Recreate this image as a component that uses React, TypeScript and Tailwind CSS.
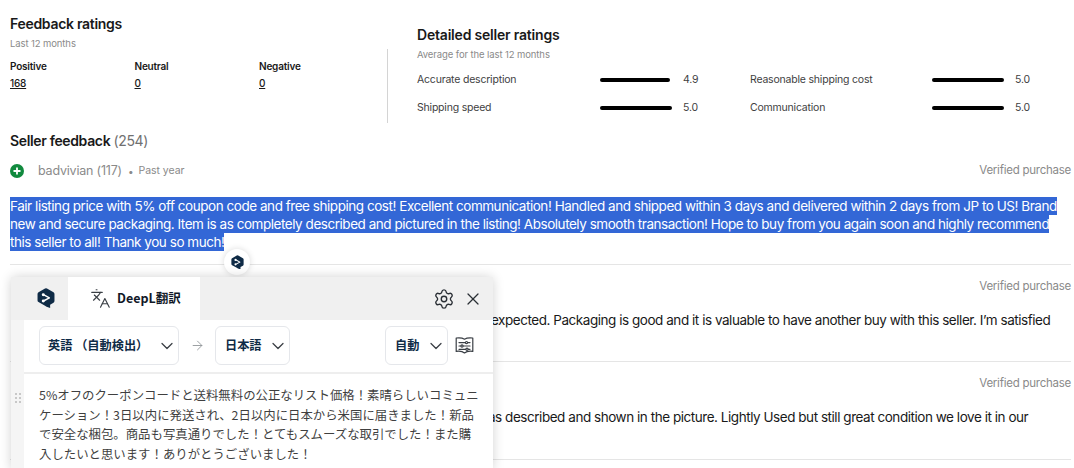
import { ArrowRight, ChevronDown, Languages, Settings, X } from 'lucide-react'

const ink = 'text-[#191919]'

function DeepLMark({ size }: { size: number }) {
  return (
    <svg width={size} height={size * 1.15} viewBox="1 0.500 18 21" fill="none">
      <path d="M9 1.100a2 2 0 0 1 2 0l6.600 3.800a2 2 0 0 1 1 1.700v7.200a2 2 0 0 1-1 1.700l-3.400 2v3.200l-3.600-1.200-1.600-.9-6.600-3.800a2 2 0 0 1-1-1.700V6.600a2 2 0 0 1 1-1.700z" fill="#0f2b46" />
      <path d="M7.400 7.300l6 3.200-6 3.200" stroke="#fff" strokeWidth="1.500" strokeLinecap="round" strokeLinejoin="round" />
      <circle cx="7.200" cy="7.400" r="1.500" fill="#fff" />
      <circle cx="7.200" cy="13.600" r="1.500" fill="#fff" />
    </svg>
  )
}

function BookSliders() {
  return (
    <svg width="19" height="19" viewBox="0 0 19 19" fill="none" stroke="#3a3f45" strokeWidth="1.200" strokeLinecap="round" strokeLinejoin="round">
      <path d="M9.500 3.200C7.500 1.900 4.200 1.600 1.200 2v13.400c3-.4 6.300-.1 8.300 1.600 2-1.700 5.300-2 8.300-1.600V2c-3-.4-6.300-.1-8.300 1.200z" />
      <path d="M4 6.600h11M4 10h11M4 13.300h11" />
      <circle cx="11.500" cy="6.600" r="1.100" fill="#fff" />
      <circle cx="7" cy="10" r="1.100" fill="#fff" />
      <circle cx="12" cy="13.300" r="1.100" fill="#fff" />
    </svg>
  )
}

function Rating({ label, value, barW, first }: { label: string; value: string; barW: string; first?: boolean }) {
  return (
    <div className="flex h-[28px] items-center text-[10.500px] tracking-[-0.2px] text-[#41413f]">
      <span className={first ? 'w-[183px]' : 'w-[182px]'}>{label}</span>
      <span className="w-[83px]">
        <span className={`block h-[4px] rounded-full bg-black ${barW}`} />
      </span>
      <span>{value}</span>
    </div>
  )
}

function Review({ text, pad }: { text: string; pad: string }) {
  return (
    <div className="border-t border-[#e5e5e5]">
      <div className="h-[46px] pt-[13px] text-right text-[11.500px] leading-[16px] tracking-[-0.25px] text-[#8a8a8a]">Verified purchase</div>
      <p className={`${pad} whitespace-nowrap text-[13.500px] leading-[18px] tracking-[-0.46px] text-[#191919]`}>{text}</p>
    </div>
  )
}

export default function App() {
  return (
    <div className="relative h-[468px] w-[1074px] overflow-hidden bg-white font-['Inter','Liberation_Sans',sans-serif]">
      <div className="pl-[10px] pr-[3px]">
        <section className="flex h-[123px]">
          <div className="w-[377px] pt-[15px]">
            <h2 className={`text-[14px] font-semibold leading-[18px] tracking-[-0.3px] ${ink}`}>Feedback ratings</h2>
            <p className="mt-[4px] text-[9.500px] leading-[14px] tracking-[-0.1px] text-[#8a8a8a]">Last 12 months</p>
            <div className="mt-[7px] grid grid-cols-[124.500px_124.500px_1fr] text-[10px] leading-[16px] tracking-[-0.2px] text-[#191919]">
              {[['Positive', '168'], ['Neutral', '0'], ['Negative', '0']].map(([name, count]) => (
                <div key={name}>
                  <div className="font-semibold">{name}</div>
                  <a className="mt-[1px] block font-medium underline">{count}</a>
                </div>
              ))}
            </div>
          </div>
          <div className="mt-[49px] w-px bg-[#d4d4d4]" />
          <div className="pl-[29px] pt-[26px]">
            <h2 className={`text-[14px] font-semibold leading-[18px] tracking-[-0.2px] ${ink}`}>Detailed seller ratings</h2>
            <p className="mt-[4px] text-[9.500px] leading-[14px] tracking-[-0.1px] text-[#8a8a8a]">Average for the last 12 months</p>
            <div className="mt-[4px] grid grid-cols-[333px_1fr]">
              <Rating label="Accurate description" value="4.9" barW="w-[70px]" first />
              <Rating label="Reasonable shipping cost" value="5.0" barW="w-[72px]" />
              <Rating label="Shipping speed" value="5.0" barW="w-[72px]" first />
              <Rating label="Communication" value="5.0" barW="w-[72px]" />
            </div>
          </div>
        </section>

        <h2 className={`mt-[9px] text-[14px] font-semibold leading-[18px] tracking-[-0.35px] ${ink}`}>
          Seller feedback <span className="font-normal text-[#707070]">(254)</span>
        </h2>

        <div className="mt-[12px] flex h-[18px] items-center text-[#8a8a8a]">
          <span className="flex h-[14px] w-[14px] items-center justify-center rounded-full bg-[#118a3e]">
            <svg width="8" height="8" viewBox="0 0 8 8"><path d="M4 0.500v7M0.500 4h7" stroke="#fff" strokeWidth="1.800" /></svg>
          </span>
          <span className="ml-[14px] text-[12.500px] tracking-[-0.2px]">badvivian (117)</span>
          <span className="ml-[6px] text-[10px]">•</span>
          <span className="ml-[5px] text-[10.500px] tracking-[-0.05px]">Past year</span>
          <span className="ml-auto text-[11.500px] tracking-[-0.25px]">Verified purchase</span>
        </div>

        <p className="mb-[13px] mt-[17px] text-[13.500px] leading-[18px] tracking-[-0.46px]">
          <span className="bg-[#3367d6] py-[1px] text-white [box-decoration-break:clone]">
            Fair listing price with 5% off coupon code and free shipping cost! Excellent communication! Handled and shipped within 3 days and delivered within 2 days from JP to US! Brand new and secure packaging. Item is as completely described and pictured in the listing! Absolutely smooth transaction! Hope to buy from you again soon and highly recommend this seller to all! Thank you so much!
          </span>
        </p>

        <Review pad="pl-[481px] h-[50px]" text="expected. Packaging is good and it is valuable to have another buy with this seller. I’m satisfied" />
        <Review pad="pl-[478px] h-[51px]" text="as described and shown in the picture. Lightly Used but still great condition we love it in our" />
        <div className="border-t border-[#e5e5e5]" />
      </div>

      <div className="absolute left-[224px] top-[249px] flex h-[26px] w-[26px] items-center justify-center rounded-full bg-white shadow-[0_0_6px_rgba(0,0,0,0.15)]">
        <DeepLMark size={13} />
      </div>

      <div className="absolute left-[11px] top-[277px] w-[482px] rounded-t-[4px] bg-[#f5f5f5] font-['Noto_Sans_CJK_JP',sans-serif] shadow-[0_0_12px_rgba(0,0,0,0.18)]">
        <div className="flex h-[43px] items-stretch bg-[#f0f0f0]">
          <div className="flex w-[57px] items-center justify-center pl-[12px]">
            <DeepLMark size={18} />
          </div>
          <div className="flex w-[132px] items-center gap-[6px] bg-white pl-[22px] text-[12.500px] font-bold text-[#111827]">
            <Languages size={21} strokeWidth={1.300} className="text-[#3a3f45]" />
            DeepL翻訳
          </div>
          <div className="ml-auto flex items-center gap-[8px] pr-[10px] text-[#2a2f35]">
            <Settings size={22} strokeWidth={1.500} />
            <X size={20} strokeWidth={1.500} />
          </div>
        </div>
        <div className="flex">
          <div className="flex w-[13px] items-center justify-center pt-[5px]">
            <div className="grid grid-cols-2 gap-[2px]">
              {[0, 1, 2, 3, 4, 5].map(i => <span key={i} className="h-[2px] w-[2px] bg-[#c8c8c8]" />)}
            </div>
          </div>
          <div className="flex-1 bg-white">
            <div className="flex h-[54px] items-center border-b-2 border-[#eeeeee] pb-[1px] pl-[15px] pr-[19px] text-[12.200px] font-bold text-[#0f2b46]">
              <div className="flex h-[39px] w-[140px] items-center justify-between rounded-[6px] border border-[#e5e7eb] pl-[8px] pr-[1px]">
                英語 （自動検出）
                <ChevronDown size={20} strokeWidth={1.500} className="text-[#3a3f45]" />
              </div>
              <ArrowRight size={15} strokeWidth={1.400} className="mx-[10.500px] text-[#8f9397]" />
              <div className="flex h-[39px] w-[75px] items-center justify-between rounded-[6px] border border-[#e5e7eb] pl-[9px] pr-[1px]">
                日本語
                <ChevronDown size={20} strokeWidth={1.500} className="text-[#3a3f45]" />
              </div>
              <div className="ml-auto flex h-[39px] w-[63px] items-center justify-between rounded-[6px] border border-[#e5e7eb] pl-[9px] pr-[1px]">
                自動
                <ChevronDown size={20} strokeWidth={1.500} className="text-[#3a3f45]" />
              </div>
              <span className="ml-[7px]"><BookSliders /></span>
            </div>
            <p className="h-[96px] pl-[15px] pr-[12px] pt-[12px] text-[12.400px] leading-[19.500px] text-[#3f3f3f]">
              5%オフのクーポンコードと送料無料の公正なリスト価格！素晴らしいコミュニケーション！3日以内に発送され、2日以内に日本から米国に届きました！新品で安全な梱包。商品も写真通りでした！とてもスムーズな取引でした！また購入したいと思います！ありがとうございました！
            </p>
          </div>
        </div>
      </div>
    </div>
  )
}
